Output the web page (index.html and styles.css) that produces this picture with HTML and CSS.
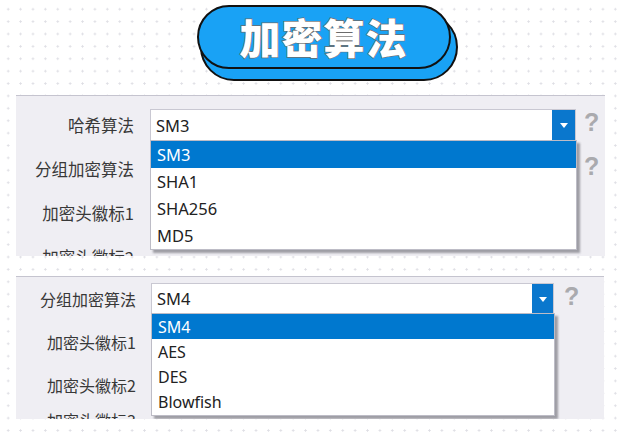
FILE: index.html
```html
<!DOCTYPE html>
<html lang="zh-CN">
<head>
<meta charset="utf-8">
<title>加密算法</title>
<link rel="stylesheet" href="styles.css">
</head>
<body>
<div class="page">
  <header class="header">
    <div class="pill"><span class="pill-text">加密算法</span></div>
  </header>

  <section class="panel panel-a">
    <div class="row">
      <div class="label">哈希算法</div>
      <div class="combo">
        <span class="combo-value">SM3</span>
        <span class="combo-btn"><span class="arrow"></span></span>
        <ul class="list">
          <li class="item selected">SM3</li>
          <li class="item">SHA1</li>
          <li class="item">SHA256</li>
          <li class="item">MD5</li>
        </ul>
      </div>
      <span class="help">?</span>
    </div>
    <div class="row">
      <div class="label">分组加密算法</div>
      <div class="combo combo-hidden"></div>
      <span class="help">?</span>
    </div>
    <div class="row">
      <div class="label">加密头徽标1</div>
    </div>
    <div class="row">
      <div class="label">加密头徽标2</div>
    </div>
  </section>

  <section class="panel panel-b">
    <div class="row">
      <div class="label">分组加密算法</div>
      <div class="combo">
        <span class="combo-value">SM4</span>
        <span class="combo-btn"><span class="arrow"></span></span>
        <ul class="list">
          <li class="item selected">SM4</li>
          <li class="item">AES</li>
          <li class="item">DES</li>
          <li class="item">Blowfish</li>
        </ul>
      </div>
      <span class="help">?</span>
    </div>
    <div class="row">
      <div class="label">加密头徽标1</div>
    </div>
    <div class="row">
      <div class="label">加密头徽标2</div>
    </div>
    <div class="row">
      <div class="label">加密头徽标3</div>
    </div>
  </section>
</div>
</body>
</html>
```

FILE: styles.css
```css
* { box-sizing: border-box; }

html, body {
  margin: 0;
  padding: 0;
}

body {
  width: 625px;
  height: 437px;
  overflow: hidden;
  background-color: #ffffff;
  background-image: radial-gradient(circle, #dedee4 0.9px, rgba(255,255,255,0) 1.3px);
  background-size: 12.4px 12.4px;
  background-position: 2px 3px;
  font-family: "Noto Sans", "Noto Sans CJK SC", sans-serif;
  color: #333;
}

.page {
  display: flex;
  flex-direction: column;
}

/* ---------- title pill ---------- */
.header {
  position: relative;
  z-index: 0;
  height: 95px;
  display: flex;
  justify-content: center;
  align-items: flex-start;
  padding-top: 5px;
  padding-left: 22px;
}

.pill {
  position: relative;
  width: 254px;
  height: 64px;
  border: 2px solid #111;
  border-radius: 34px;
  background: #19a2f5;
  display: flex;
  align-items: center;
  justify-content: center;
}

.pill::before {
  content: "";
  position: absolute;
  left: 1px;
  top: 6px;
  width: 254px;
  height: 64px;
  border: 2px solid #111;
  border-radius: 34px;
  background: #19a2f5;
  z-index: -1;
}

.pill-text {
  font-family: "Noto Sans CJK SC", sans-serif;
  font-weight: 900;
  font-size: 41px;
  line-height: 1;
  letter-spacing: 1px;
  color: #ffffff;
  -webkit-text-stroke: 1.3px #6b6b6b;
  paint-order: stroke fill;
  margin-top: -2px;
}

/* ---------- panels ---------- */
.panel {
  margin-left: 16px;
  background: #efeef3;
  border-top: 1px solid #c5c4cf;
  overflow: hidden;
  display: flex;
  flex-direction: column;
}

.panel-a {
  width: 589px;
  height: 161px;
  padding-top: 7px;
}

.panel-b {
  width: 588px;
  height: 143px;
  margin-top: 20px;
  padding-top: 0;
}

.row {
  display: flex;
  align-items: center;
  flex-shrink: 0;
}

.panel-a .row { height: 44px; }
.panel-b .row { height: 43px; }
.panel-b .row:last-child { height: 40px; align-items: flex-start; padding-top: 2px; }

.label {
  text-align: right;
  font-family: "Noto Sans CJK SC", sans-serif;
  color: #383838;
  white-space: nowrap;
}

.panel-a .label { width: 118px; font-size: 16.5px; margin-right: 16px; }
.panel-b .label { width: 120px; font-size: 16px; margin-right: 15px; }

/* ---------- combo ---------- */
.combo {
  position: relative;
  height: 32px;
  background: #ffffff;
  border: 1px solid #c9c8d2;
  display: flex;
  align-items: center;
}

.panel-a .combo { width: 426px; }
.panel-b .combo { width: 403px; height: 31px; }

.combo-hidden { visibility: hidden; }

.combo-value {
  flex: 1;
  padding-left: 5px;
  font-size: 16.5px;
  color: #222;
}

.combo-btn {
  width: 23px;
  height: 100%;
  background: #0a77cd;
  display: flex;
  align-items: center;
  justify-content: center;
}

.panel-b .combo-btn { width: 21px; }

.arrow {
  width: 0;
  height: 0;
  border-left: 4px solid transparent;
  border-right: 4px solid transparent;
  border-top: 5px solid #ffffff;
  margin-top: 1px;
}

.help {
  font-family: "Liberation Sans", sans-serif;
  font-weight: 700;
  font-size: 25px;
  color: #aaaaae;
  line-height: 1;
}

.panel-a .help { margin-left: 8px; margin-top: -5px; }
.panel-b .help { margin-left: 10px; margin-top: -5px; }

/* ---------- dropdown list ---------- */
.list {
  position: absolute;
  z-index: 2;
  left: -1px;
  top: 100%;
  margin: 0;
  padding: 0;
  list-style: none;
  background: #ffffff;
  border: 1px solid #bdbcc6;
  box-shadow: 3px 3px 2px rgba(60, 60, 70, 0.45);
}

.panel-a .list { width: 427px; }
.panel-b .list { width: 404px; }

.item {
  padding-left: 6px;
  font-size: 16.5px;
  color: #222;
  display: flex;
  align-items: center;
}

.panel-a .item { height: 27px; }
.panel-b .item { height: 25.2px; font-size: 16px; }

.item.selected {
  background: #0078cf;
  color: #ffffff;
}
```
